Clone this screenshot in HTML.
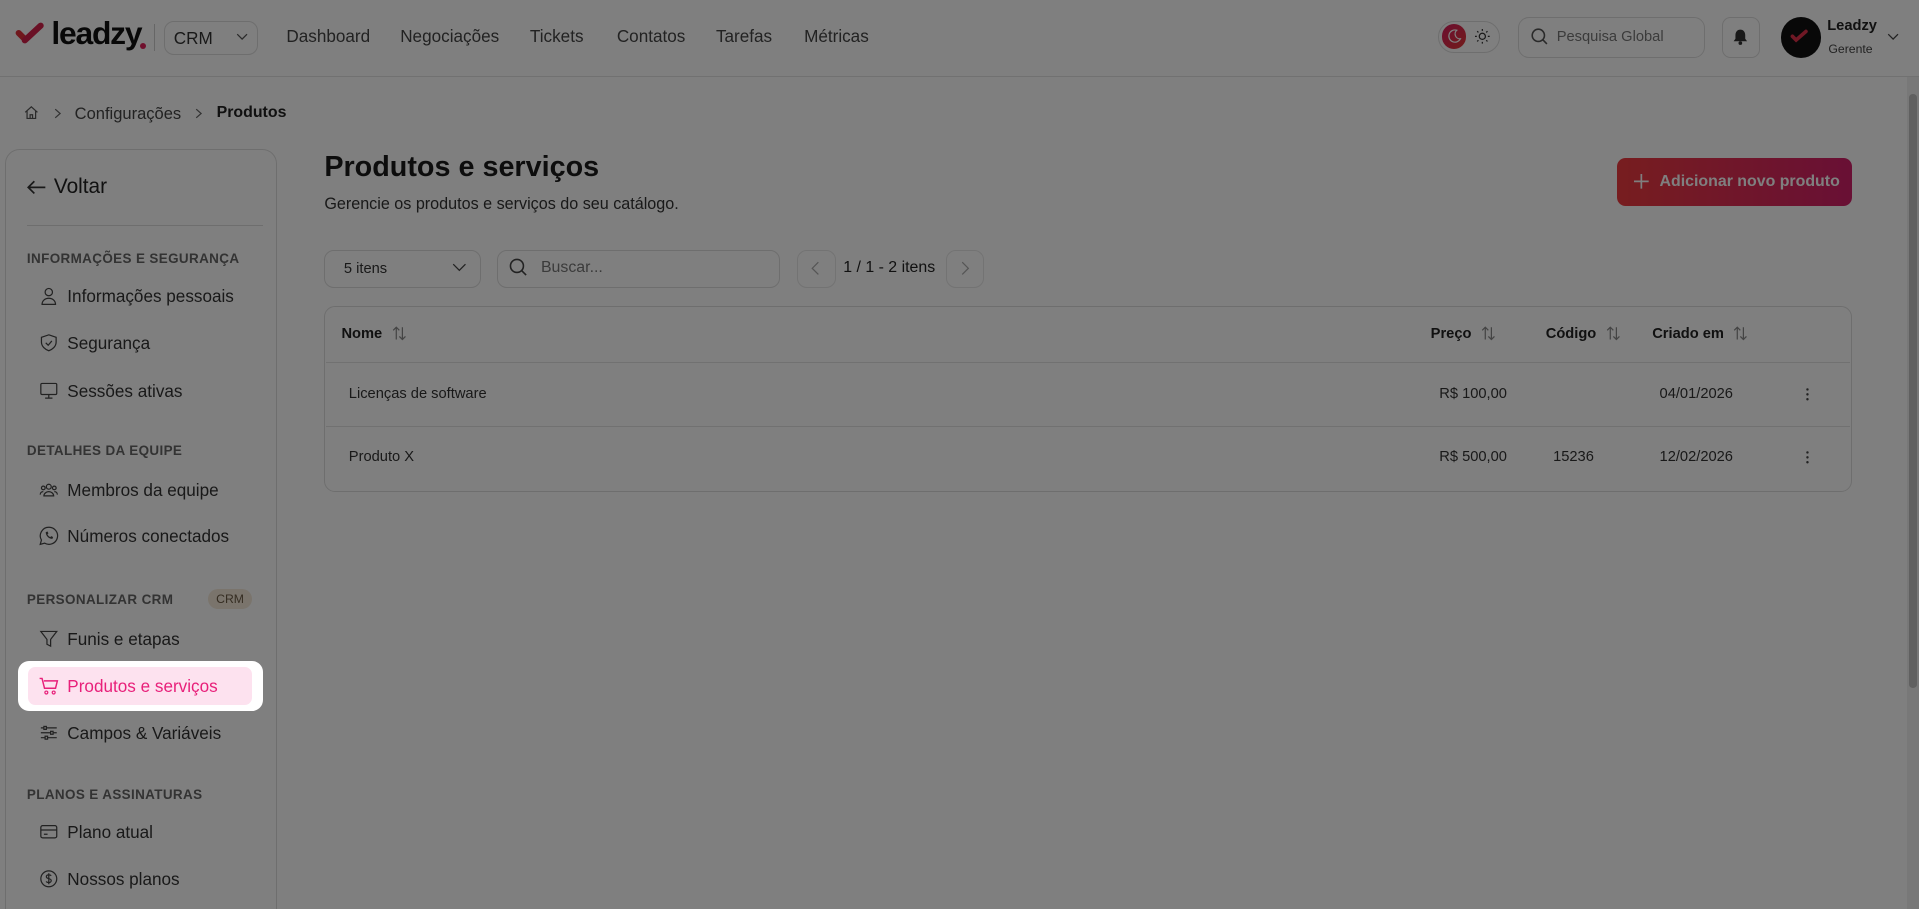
<!DOCTYPE html>
<html><head><meta charset="utf-8"><style>
*{box-sizing:border-box;margin:0;padding:0}
html,body{width:1919px;height:909px;overflow:hidden;background:#fff}
#z{zoom:1.22385;width:1568px;height:743px;position:relative;font-family:"Liberation Sans",sans-serif;color:#222;background:#fff}
.a{position:absolute;white-space:nowrap}
.nav{font-size:14px;color:#444;top:21px}
.hdr{position:absolute;left:0;top:0;width:1568px;height:63px;border-bottom:1px solid #e3e3e3}
.sec{font-size:11px;color:#666;font-weight:bold;letter-spacing:.3px;left:22px}
.it{font-size:14px;color:#333;left:55px}
.ic{position:absolute;left:32px;width:16px;height:16px}
.box{position:absolute;border:1px solid #ddd;border-radius:7px}
.th{font-size:12px;font-weight:bold;color:#222;top:266px}
.td{font-size:12px;color:#333}
#ov{position:absolute;left:0;top:0;width:1568px;height:743px;background:rgba(0,0,0,.5)}
svg{overflow:visible}
</style></head><body><div id="z">
<div class="hdr"></div>
<svg class="a" style="left:12px;top:18px" width="26" height="20" viewBox="0 0 26 20"><path d="M3 9 L8 14" stroke="#e0303a" stroke-width="5" stroke-linecap="round"/><path d="M8 15 L21 3" stroke="#d4204a" stroke-width="5" stroke-linecap="round"/></svg>
<div class="a" style="left:42px;top:12px;font-size:26px;font-weight:bold;color:#111;letter-spacing:-1px">leadzy</div>
<div class="a" style="left:114px;top:35px;width:5px;height:5px;border-radius:50%;background:#e0205a"></div>
<div class="a" style="left:126px;top:20px;width:1px;height:22px;background:#ccc"></div>
<div class="box" style="left:134px;top:17px;width:77px;height:28px;border-radius:8px"></div>
<div class="a" style="left:142px;top:23px;font-size:14px;color:#333">CRM</div>
<svg class="a" style="left:193px;top:27px" width="10" height="6"><path d="M1 1 L5 5 L9 1" stroke="#555" fill="none"/></svg>
<div class="a nav" style="left:234px">Dashboard</div>
<div class="a nav" style="left:327px">Negociações</div>
<div class="a nav" style="left:433px">Tickets</div>
<div class="a nav" style="left:504px">Contatos</div>
<div class="a nav" style="left:585px">Tarefas</div>
<div class="a nav" style="left:657px">Métricas</div>
<div class="box" style="left:1175px;top:17px;width:51px;height:26px;border-radius:13px"></div>
<div class="a" style="left:1178px;top:20px;width:20px;height:20px;border-radius:50%;background:linear-gradient(135deg,#d81b60,#e53935)"></div>
<svg class="a" style="left:1182px;top:24px" width="12" height="12" viewBox="0 0 12 12"><path d="M8 1 A5 5 0 1 0 11 8 A4 4 0 0 1 8 1Z" stroke="#fff" fill="none"/></svg>
<svg class="a" style="left:1205px;top:24px" width="12" height="12" viewBox="0 0 12 12"><circle cx="6" cy="6" r="2.5" stroke="#333" fill="none"/><path d="M6 0v1.5M6 10.5V12M0 6h1.5M10.5 6H12M1.8 1.8l1 1M9.2 9.2l1 1M1.8 10.2l1-1M9.2 2.8l1-1" stroke="#333"/></svg>
<div class="box" style="left:1240px;top:14px;width:153px;height:33px;border-radius:9px"></div>
<svg class="a" style="left:1251px;top:23px" width="14" height="14" viewBox="0 0 14 14"><circle cx="6" cy="6" r="5" stroke="#555" fill="none" stroke-width="1.3"/><path d="M9.5 9.5L13 13" stroke="#555" stroke-width="1.3"/></svg>
<div class="a" style="left:1272px;top:24px;font-size:12px;color:#777">Pesquisa Global</div>
<div class="box" style="left:1407px;top:14px;width:31px;height:33px;border-radius:7px"></div>
<svg class="a" style="left:1416px;top:24px" width="12" height="13" viewBox="0 0 12 13"><path d="M6 0.5C3.5 0.5 2 2.5 2 5v3L0.5 10h11L10 8V5C10 2.5 8.5 0.5 6 0.5Z" fill="#333"/><circle cx="6" cy="11.5" r="1.5" fill="#333"/></svg>
<div class="a" style="left:1455px;top:14px;width:33px;height:33px;border-radius:50%;background:#111"></div>
<svg class="a" style="left:1463px;top:24px" width="16" height="13" viewBox="0 0 16 13"><path d="M2 6L5 9L13 2" stroke="#e0304a" stroke-width="3" fill="none" stroke-linecap="round"/></svg>
<div class="a" style="left:1493px;top:15px;font-size:12px;font-weight:bold;color:#222">Leadzy</div>
<div class="a" style="left:1494px;top:34px;font-size:10px;color:#444">Gerente</div>
<svg class="a" style="left:1542px;top:27px" width="10" height="6"><path d="M1 1 L5 5 L9 1" stroke="#444" fill="none"/></svg>
<div class="a" style="left:1558px;top:63px;width:10px;height:680px;background:#f1f1f1"></div>
<div class="a" style="left:1560px;top:77px;width:6px;height:485px;border-radius:3px;background:#c1c1c1"></div>
<svg class="a" style="left:20px;top:86px" width="12" height="12" viewBox="0 0 12 12"><path d="M1 6L6 1.5L11 6M2.5 5v6h7V5M5 11V8h2v3" stroke="#555" fill="none"/></svg>
<svg class="a" style="left:44px;top:88px" width="6" height="9"><path d="M1 1L5 4.5L1 8" stroke="#666" fill="none"/></svg>
<div class="a" style="left:61px;top:85px;font-size:13.5px;color:#444">Configurações</div>
<svg class="a" style="left:159px;top:88px" width="6" height="9"><path d="M1 1L5 4.5L1 8" stroke="#666" fill="none"/></svg>
<div class="a" style="left:177px;top:85px;font-size:13px;color:#222;font-weight:bold">Produtos</div>
<div class="a" style="left:4px;top:122px;width:222px;height:640px;border:1px solid #ddd;border-radius:12px"></div>
<svg class="a" style="left:22px;top:147px" width="16" height="12" viewBox="0 0 16 12"><path d="M15 6H1M6 1L1 6L6 11" stroke="#333" fill="none" stroke-width="1.4"/></svg>
<div class="a" style="left:44px;top:143px;font-size:17px;color:#222">Voltar</div>
<div class="a" style="left:22px;top:184px;width:193px;height:1px;background:#ddd"></div>
<div class="a sec" style="top:205px">INFORMAÇÕES E SEGURANÇA</div>
<svg class="ic" style="top:234px" viewBox="0 0 16 16"><circle cx="8" cy="5" r="3" stroke="#444" fill="none"/><path d="M2.5 15c0-3 2.5-5 5.5-5s5.5 2 5.5 5z" stroke="#444" fill="none"/></svg>
<div class="a it" style="top:234px">Informações pessoais</div>
<svg class="ic" style="top:272px" viewBox="0 0 16 16"><path d="M8 1.5L14 3.5v4c0 3.5-3 6-6 7-3-1-6-3.5-6-7v-4z" stroke="#444" fill="none"/><path d="M5.5 8l2 2 3-3.5" stroke="#444" fill="none"/></svg>
<div class="a it" style="top:272px">Segurança</div>
<svg class="ic" style="top:311px" viewBox="0 0 16 16"><rect x="1.5" y="2" width="13" height="9" rx="1" stroke="#444" fill="none"/><path d="M5 14h6M8 11v3" stroke="#444"/></svg>
<div class="a it" style="top:311px">Sessões ativas</div>
<div class="a sec" style="top:362px">DETALHES DA EQUIPE</div>
<svg class="ic" style="top:392px" viewBox="0 0 16 16"><circle cx="8" cy="5.5" r="2" stroke="#444" fill="none"/><circle cx="3.5" cy="6.5" r="1.5" stroke="#444" fill="none"/><circle cx="12.5" cy="6.5" r="1.5" stroke="#444" fill="none"/><path d="M4 13c0-2 2-3.5 4-3.5s4 1.5 4 3.5zM1 12c0-1.5 1-2.5 2.5-2.5M15 12c0-1.5-1-2.5-2.5-2.5" stroke="#444" fill="none"/></svg>
<div class="a it" style="top:392px">Membros da equipe</div>
<svg class="ic" style="top:430px" viewBox="0 0 16 16"><path d="M8 1a7 7 0 0 0-6 10.5L1 15l3.6-1A7 7 0 1 0 8 1z" stroke="#444" fill="none"/><path d="M5.5 5c0 3 2.5 5.5 5.5 5.5l.5-1.5-1.5-.7-.8.8c-1-.5-1.8-1.3-2.3-2.300l.8-.8L7 4.5z" fill="#444"/></svg>
<div class="a it" style="top:430px">Números conectados</div>
<div class="a sec" style="top:484px">PERSONALIZAR CRM</div>
<div class="a" style="left:170px;top:481px;width:36px;height:17px;border-radius:9px;background:#f4e8d8;font-size:10px;color:#6b5a45;text-align:center;line-height:17px">CRM</div>
<svg class="ic" style="top:514px" viewBox="0 0 16 16"><path d="M1.5 2h13L9.5 8.5V14l-3-1.5V8.5z" stroke="#444" fill="none"/></svg>
<div class="a it" style="top:514px">Funis e etapas</div>
<svg class="ic" style="top:591px" viewBox="0 0 16 16"><path d="M1.5 4h13M1.5 8h13M1.5 12h13" stroke="#444"/><rect x="4" y="2.8" width="2" height="2.4" fill="#fff" stroke="#444"/><rect x="9.5" y="6.8" width="2" height="2.4" fill="#fff" stroke="#444"/><rect x="5" y="10.8" width="2" height="2.4" fill="#fff" stroke="#444"/></svg>
<div class="a it" style="top:591px">Campos &amp; Variáveis</div>
<div class="a sec" style="top:643px">PLANOS E ASSINATURAS</div>
<svg class="ic" style="top:672px" viewBox="0 0 16 16"><rect x="1.5" y="3" width="13" height="10" rx="1.5" stroke="#444" fill="none"/><path d="M1.5 6.5h13M4 10h3" stroke="#444"/></svg>
<div class="a it" style="top:672px">Plano atual</div>
<svg class="ic" style="top:710px" viewBox="0 0 16 16"><circle cx="8" cy="8" r="6.5" stroke="#444" fill="none"/><path d="M10 5.5C9.5 5 9 4.8 8 4.8 6.8 4.8 6 5.4 6 6.3 6 8.3 10 7.3 10 9.5c0 .9-.8 1.6-2 1.6-1 0-1.7-.3-2.2-.9M8 3.5v9" stroke="#444" fill="none"/></svg>
<div class="a it" style="top:710px">Nossos planos</div>
<div class="a" style="left:265px;top:123px;font-size:23.5px;font-weight:bold;color:#1a1a1a">Produtos e serviços</div>
<div class="a" style="left:265px;top:159px;font-size:13.2px;color:#333">Gerencie os produtos e serviços do seu catálogo.</div>
<div class="a" style="left:1321px;top:129px;width:192px;height:39px;border-radius:7px;background:linear-gradient(90deg,#ef3b3f,#d2206a)"></div>
<svg class="a" style="left:1335px;top:142px" width="12" height="12"><path d="M6 0v12M0 6h12" stroke="#fff" stroke-width="1.4"/></svg>
<div class="a" style="left:1356px;top:141px;font-size:13px;color:#fff;font-weight:bold">Adicionar novo produto</div>
<div class="box" style="left:265px;top:204px;width:128px;height:31px;border-radius:8px"></div>
<div class="a" style="left:281px;top:213px;font-size:12px;color:#333">5 itens</div>
<svg class="a" style="left:369px;top:215px" width="12" height="7"><path d="M1 1L6 6L11 1" stroke="#444" fill="none"/></svg>
<div class="box" style="left:406px;top:204px;width:231px;height:31px;border-radius:8px"></div>
<svg class="a" style="left:416px;top:211px" width="15" height="15" viewBox="0 0 15 15"><circle cx="6.5" cy="6.5" r="5.3" stroke="#444" fill="none" stroke-width="1.3"/><path d="M10.3 10.3L14 14" stroke="#444" stroke-width="1.3"/></svg>
<div class="a" style="left:442px;top:212px;font-size:13px;color:#777">Buscar...</div>
<div class="box" style="left:651px;top:204px;width:32px;height:31px;border-radius:8px;border-color:#e6e6e6"></div>
<svg class="a" style="left:663px;top:213px" width="7" height="12"><path d="M6 1L1 6L6 11" stroke="#aaa" fill="none"/></svg>
<div class="a" style="left:689px;top:212px;font-size:13px;color:#222">1 / 1 - 2 itens</div>
<div class="box" style="left:773px;top:204px;width:31px;height:31px;border-radius:8px;border-color:#e6e6e6"></div>
<svg class="a" style="left:785px;top:213px" width="7" height="12"><path d="M1 1L6 6L1 11" stroke="#aaa" fill="none"/></svg>
<div class="box" style="left:265px;top:250px;width:1248px;height:152px;border-radius:9px"></div>
<div class="a" style="left:266px;top:296px;width:1246px;height:1px;background:#e3e3e3"></div>
<div class="a" style="left:266px;top:348px;width:1246px;height:1px;background:#e3e3e3"></div>
<div class="a th" style="left:279px">Nome</div>
<div class="a th" style="left:1169px">Preço</div>
<div class="a th" style="left:1263px">Código</div>
<div class="a th" style="left:1350px">Criado em</div>
<svg class="a" style="left:320px;top:266px" width="12" height="12" viewBox="0 0 12 12"><path d="M3.5 11V1M1 3.5L3.5 1 6 3.5M8.5 1v10M6 8.5l2.5 2.5L11 8.5" stroke="#888" fill="none"/></svg>
<svg class="a" style="left:1210px;top:266px" width="12" height="12" viewBox="0 0 12 12"><path d="M3.5 11V1M1 3.5L3.5 1 6 3.5M8.5 1v10M6 8.5l2.5 2.5L11 8.5" stroke="#888" fill="none"/></svg>
<svg class="a" style="left:1312px;top:266px" width="12" height="12" viewBox="0 0 12 12"><path d="M3.5 11V1M1 3.5L3.5 1 6 3.5M8.5 1v10M6 8.5l2.5 2.5L11 8.5" stroke="#888" fill="none"/></svg>
<svg class="a" style="left:1416px;top:266px" width="12" height="12" viewBox="0 0 12 12"><path d="M3.5 11V1M1 3.5L3.5 1 6 3.5M8.5 1v10M6 8.5l2.5 2.5L11 8.5" stroke="#888" fill="none"/></svg>
<div class="a td" style="left:285px;top:315px">Licenças de software</div>
<div class="a td" style="left:1176px;top:315px">R$ 100,00</div>
<div class="a td" style="left:1356px;top:315px">04/01/2026</div>
<div class="a td" style="left:285px;top:367px">Produto X</div>
<div class="a td" style="left:1176px;top:367px">R$ 500,00</div>
<div class="a td" style="left:1269px;top:367px">15236</div>
<div class="a td" style="left:1356px;top:367px">12/02/2026</div>
<svg class="a" style="left:1475px;top:316px" width="4" height="12"><circle cx="2" cy="2" r="1" fill="#444"/><circle cx="2" cy="6" r="1" fill="#444"/><circle cx="2" cy="10" r="1" fill="#444"/></svg>
<svg class="a" style="left:1475px;top:368px" width="4" height="12"><circle cx="2" cy="2" r="1" fill="#444"/><circle cx="2" cy="6" r="1" fill="#444"/><circle cx="2" cy="10" r="1" fill="#444"/></svg>
<div id="ov"></div>
<div class="a" style="left:15px;top:540px;width:200px;height:41px;border-radius:9px;background:#fff"></div>
<div class="a" style="left:23px;top:545px;width:183px;height:31px;border-radius:6px;background:#fde2ef"></div>
<svg class="ic" style="top:552px" viewBox="0 0 16 16"><path d="M0.5 2h2l2 8h9l1.5-6H4" stroke="#e8207a" fill="none" stroke-width="1.2"/><circle cx="6" cy="13.5" r="1.2" stroke="#e8207a" fill="none"/><circle cx="12" cy="13.5" r="1.2" stroke="#e8207a" fill="none"/></svg>
<div class="a it" style="top:552px;color:#e8207a">Produtos e serviços</div>
</div></body></html>
